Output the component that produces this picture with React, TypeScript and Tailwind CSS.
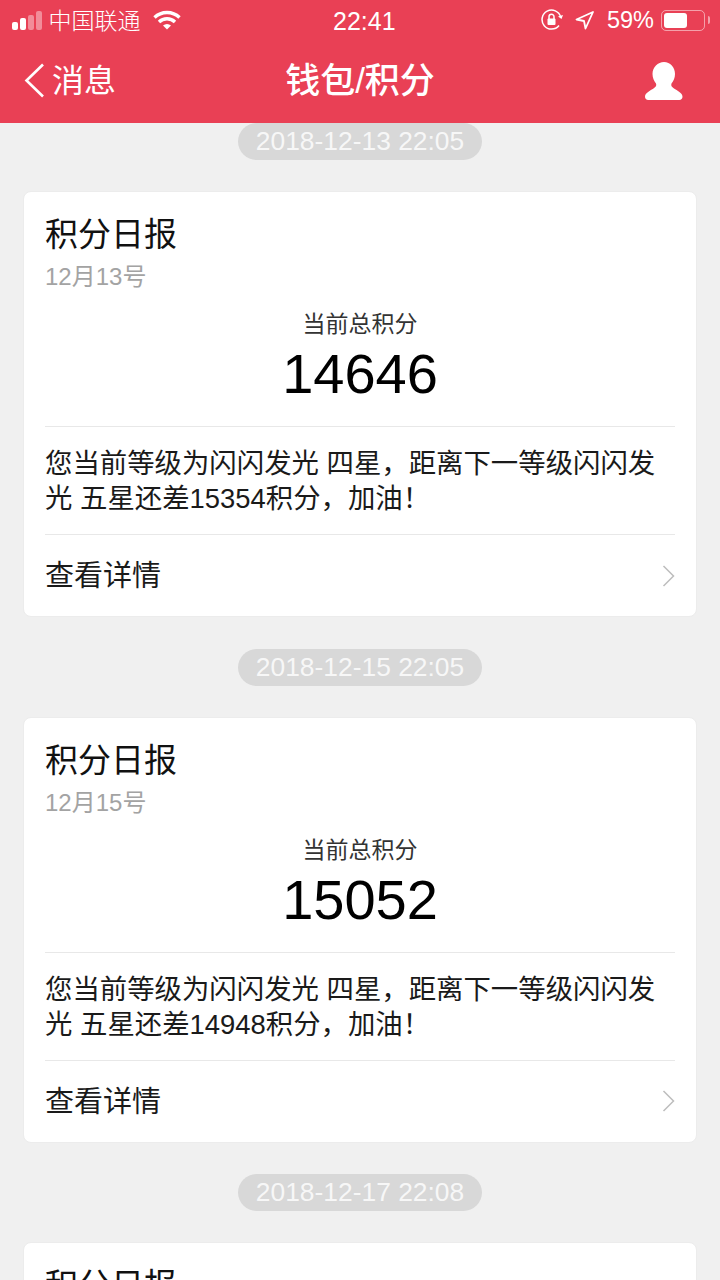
const reports = [
  { time: "2018-12-13 22:05", day: "12月13号", total: "14646", left: "15354" },
  { time: "2018-12-15 22:05", day: "12月15号", total: "15052", left: "14948" },
];

function StatusBar() {
  return (
    <div className="flex h-[40px] items-center justify-between text-white">
      <div className="flex items-center">
        <div className="ml-[12px] flex items-end gap-[2.500px]">
          <span className="h-[8px] w-[5.500px] rounded-[2px] bg-white" />
          <span className="h-[12px] w-[5.500px] rounded-[2px] bg-white" />
          <span className="h-[15px] w-[5.500px] rounded-[2px] bg-white/40" />
          <span className="h-[19px] w-[5.500px] rounded-[2px] bg-white/40" />
        </div>
        <span className="mt-[2px] ml-[7px] text-[23px] leading-none font-light">中国联通</span>
        <svg className="ml-[12px]" width="28" height="20" viewBox="0 0 28 20" fill="none" stroke="white" strokeWidth="3.4">
          <path d="M1.5 7.5a18 18 0 0 1 25 0" />
          <path d="M6 12a11.500 11.500 0 0 1 16 0" />
          <path d="M14 19.500l-4-4a6 6 0 0 1 8 0z" fill="white" stroke="none" />
        </svg>
      </div>
      <span className="absolute top-[9px] left-[333px] text-[25px] leading-none font-medium">22:41</span>
      <div className="flex items-center">
        <svg width="22" height="22" viewBox="0 0 22 22" fill="none" stroke="white" strokeWidth="1.500">
          <path d="M18 16.500A9.500 9.500 0 1 1 19.700 8" />
          <path d="M17 7.500l3.500 2.500 1.500-4" fill="white" stroke="none" />
          <rect x="6.500" y="9.500" width="8" height="6.500" rx="1" fill="white" stroke="none" />
          <path d="M8 10V7.800a2.500 2.500 0 0 1 5 0V10" />
        </svg>
        <svg className="ml-[12px]" width="19" height="19" viewBox="0 0 19 19" fill="none" stroke="white" strokeWidth="1.800" strokeLinejoin="round">
          <path d="M18 1L1.500 8.500l7.500 1.500 1.500 7.500z" />
        </svg>
        <span className="mt-[2px] ml-[13px] text-[23.500px] leading-none font-light">59%</span>
        <div className="ml-[7px] flex h-[21px] w-[44px] items-center rounded-[5px] border border-white/50 p-[2px]">
          <div className="h-full w-[23px] rounded-[3px] bg-white" />
        </div>
        <span className="mr-[10px] ml-[3px] h-[8px] w-[2px] rounded-r-[2px] bg-white/50" />
      </div>
    </div>
  );
}

function Header() {
  return (
    <header className="h-[123px] bg-[#e94055]">
      <StatusBar />
      <div className="relative flex h-[83px] items-start justify-between text-white">
        <div className="mt-[23px] ml-[24px] flex items-center">
          <svg width="21" height="35" viewBox="0 0 21 35" fill="none" stroke="white" strokeWidth="2.600">
            <path d="M19 1.500L2.500 17.500 19 33.500" />
          </svg>
          <span className="ml-[7px] text-[32px] leading-none">消息</span>
        </div>
        <h1 className="absolute top-[22px] w-full text-center text-[35px] leading-[38px] font-medium">钱包/积分</h1>
        <svg className="mt-[22px] mr-[37px]" width="38" height="38" viewBox="0 0 38 38" fill="white">
          <path d="M19 0c6.200 0 11 5 11 12 0 3.700-1.500 7-3.500 9.500-.8 2 .2 3.500 2.500 5 3 1.800 8.500 4.500 8.500 8.200 0 1.800-1.300 3.300-3.200 3.300H3.200C1.300 38 0 36.500 0 34.700c0-3.700 5.500-6.400 8.500-8.200 2.300-1.500 3.300-3 2.500-5C9 19 7.500 15.700 7.500 12 7.500 5 12.800 0 19 0z" />
        </svg>
      </div>
    </header>
  );
}

function TimePill({ time }: { time: string }) {
  return (
    <div className="flex justify-center">
      <span className="flex h-[37px] w-[244px] items-center justify-center rounded-full bg-[#d8d8d8] text-[26.400px] leading-none text-[#f7f7f7]">
        {time}
      </span>
    </div>
  );
}

function ReportCard({ day, total, left }: { day: string; total: string; left: string }) {
  return (
    <div className="mx-[23px] h-[426px] rounded-[8px] border border-[#ececec] bg-white pr-[21px] pl-[21px]">
      <div className="pt-[23px] text-[33px] leading-[40px] text-[#111]">积分日报</div>
      <div className="mt-[7px] text-[24px] leading-[30px] text-[#a3a3a3]">{day}</div>
      <div className="mt-[18px] text-center text-[23px] leading-[28px] text-[#333]">当前总积分</div>
      <div className="mt-[3px] text-center text-[56px] leading-[66px] text-black">{total}</div>
      <div className="mt-[19px] border-t border-[#e8e8e8] pt-[19px] text-[27.400px] leading-[35px] text-[#1a1a1a]">
        您当前等级为闪闪发光 四星，距离下一等级闪闪发光 五星还差{left}积分，加油！
      </div>
      <div className="mt-[18px] flex h-[82px] items-center justify-between border-t border-[#e8e8e8]">
        <span className="pt-[2px] text-[29px] leading-none text-[#1a1a1a]">查看详情</span>
        <svg width="13" height="22" viewBox="0 0 13 22" fill="none" stroke="#bdbdbd" strokeWidth="1.500">
          <path d="M1.500 1l10 10-10 10" />
        </svg>
      </div>
    </div>
  );
}

export default function App() {
  return (
    <div className="h-[1280px] overflow-hidden bg-[#f0f0f0] font-['Liberation_Sans','Noto_Sans_CJK_SC',sans-serif]">
      <Header />
      {reports.map((r) => (
        <div key={r.time} className="mb-[31.600px]">
          <TimePill time={r.time} />
          <div className="mt-[31px]">
            <ReportCard day={r.day} total={r.total} left={r.left} />
          </div>
        </div>
      ))}
      <TimePill time="2018-12-17 22:08" />
      <div className="mt-[31px]">
        <div className="mx-[23px] h-[100px] rounded-[8px] border border-[#ececec] bg-white pl-[21px]">
          <div className="pt-[23px] text-[33px] leading-[40px] text-[#111]">积分日报</div>
        </div>
      </div>
    </div>
  );
}
